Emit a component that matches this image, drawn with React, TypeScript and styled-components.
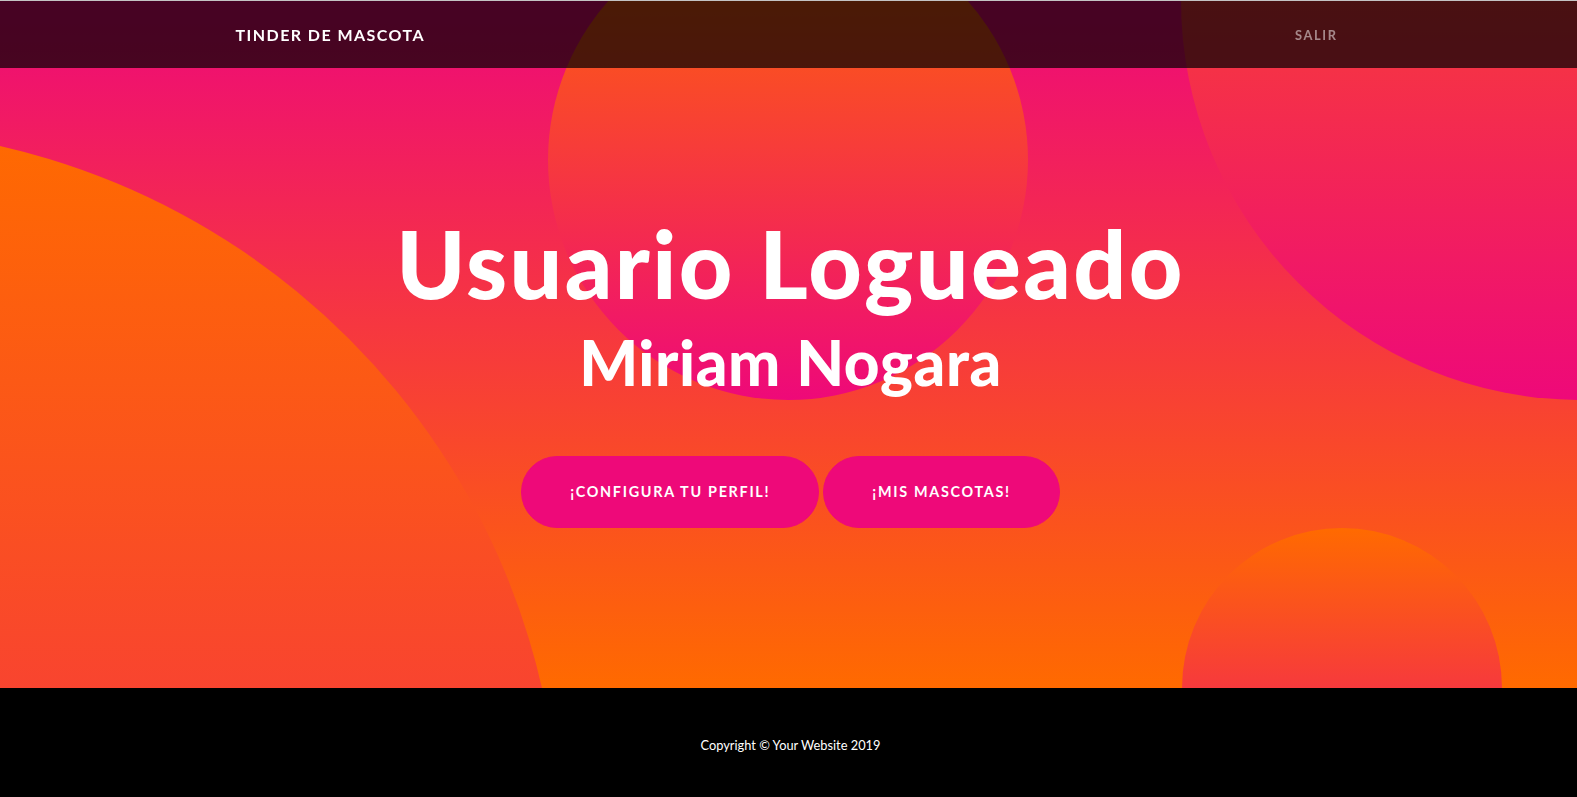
import React from "react";
import styled, { createGlobalStyle } from "styled-components";

const GlobalStyle = createGlobalStyle`
  html, body { margin: 0; padding: 0; overflow-x: hidden; }
  body {
    font-family: Lato, "Noto Sans", sans-serif;
    background: #fff;
    color: #212529;
  }
  * { box-sizing: border-box; }
`;

const Page = styled.div`
  width: calc(100% + 4px);
`;

const Nav = styled.nav`
  position: fixed;
  top: 0;
  left: 0;
  width: calc(100% + 4px);
  z-index: 10;
  height: 68px;
  border-top: 1px solid #c4c4c4;
  background: rgba(0, 0, 0, 0.7);
  display: flex;
  align-items: center;
`;

const Container = styled.div`
  width: 100%;
  max-width: 1140px;
  margin: 0 auto;
  padding: 0 15px;
`;

const NavInner = styled(Container)`
  display: flex;
  align-items: center;
  justify-content: space-between;
`;

const Brand = styled.a`
  color: #fff;
  font-weight: 700;
  font-size: 16px;
  line-height: 24px;
  letter-spacing: 1.45px;
  text-transform: uppercase;
  text-decoration: none;
`;

const NavLink = styled.a`
  color: rgba(255, 255, 255, 0.5);
  font-size: 12.8px;
  font-weight: 700;
  letter-spacing: 1.6px;
  text-transform: uppercase;
  padding: 8px;
  text-decoration: none;
`;

const Masthead = styled.header`
  position: relative;
  overflow: hidden;
  height: 688px;
  background: linear-gradient(0deg, #ff6a00 0%, #ee0979 100%);
`;

type CircleProps = {
  $size: number;
  $top?: string;
  $bottom?: string;
  $left?: string;
  $right?: string;
};

const Circle = styled.div<CircleProps>`
  position: absolute;
  z-index: 0;
  border-radius: 50%;
  background: linear-gradient(0deg, #ee0979 0%, #ff6a00 100%);
  width: ${(p) => p.$size}px;
  height: ${(p) => p.$size}px;
  top: ${(p) => p.$top ?? "auto"};
  bottom: ${(p) => p.$bottom ?? "auto"};
  left: ${(p) => p.$left ?? "auto"};
  right: ${(p) => p.$right ?? "auto"};
`;

const Content = styled(Container)`
  position: relative;
  z-index: 1;
  padding-top: 208px;
  text-align: center;
  color: #fff;
`;

const Heading = styled.h1`
  margin: 0;
  font-size: 93px;
  line-height: 1.2;
  font-weight: 900;
  letter-spacing: 2.4px;
`;

const SubHeading = styled.h2`
  margin: 5px 0 0;
  font-size: 62px;
  line-height: 1.2;
  font-weight: 900;
  letter-spacing: 0.6px;
`;

const Actions = styled.div`
  margin-top: 57px;
  display: flex;
  justify-content: center;
  gap: 4px;
`;

const PillButton = styled.a`
  display: inline-block;
  background: #ee0979;
  border: 1px solid #ee0979;
  color: #fff;
  padding: 24px 48px;
  font-size: 14.4px;
  line-height: 21.6px;
  font-weight: 700;
  letter-spacing: 1.7px;
  text-transform: uppercase;
  border-radius: 80px;
  text-decoration: none;
`;

const Footer = styled.footer`
  background: #000;
  padding: 48px 0;
`;

const FooterText = styled.p`
  margin: 0;
  text-align: center;
  color: #fff;
  font-size: 12.8px;
  line-height: 19.2px;
`;

export default function App() {
  return (
    <Page>
      <GlobalStyle />
      <Nav>
        <NavInner>
          <Brand href="#">Tinder de Mascota</Brand>
          <NavLink href="#">Salir</NavLink>
        </NavInner>
      </Nav>
      <Masthead>
        <Circle $size={1440} $bottom="-880px" $left="-880px" />
        <Circle $size={800} $top="-400px" $right="-400px" />
        <Circle $size={320} $bottom="-160px" $right="5%" />
        <Circle $size={480} $top="-80px" $right="35%" />
        <Content>
          <Heading>Usuario Logueado</Heading>
          <SubHeading>Miriam Nogara</SubHeading>
          <Actions>
            <PillButton href="#">¡Configura tu perfil!</PillButton>
            <PillButton href="#">¡Mis Mascotas!</PillButton>
          </Actions>
        </Content>
      </Masthead>
      <Footer>
        <FooterText>Copyright © Your Website 2019</FooterText>
      </Footer>
    </Page>
  );
}
